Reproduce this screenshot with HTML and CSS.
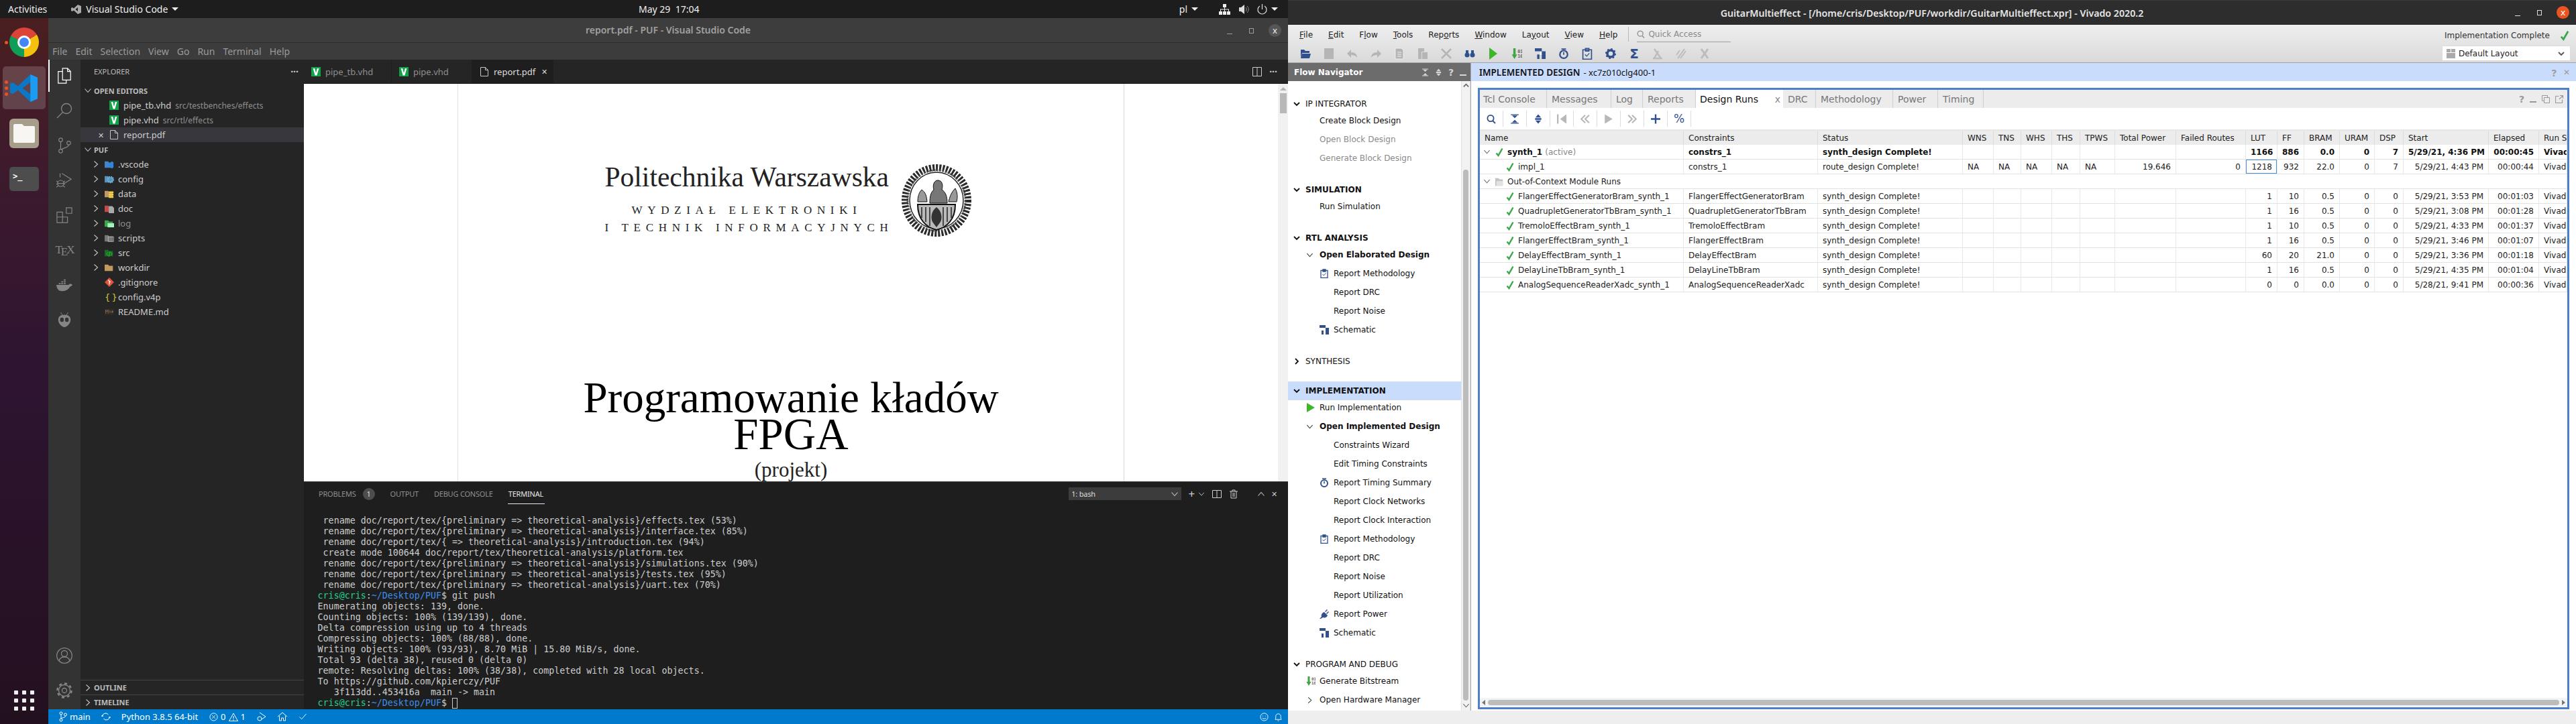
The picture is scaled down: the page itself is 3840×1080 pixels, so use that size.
FILE: index.html
```html
<!DOCTYPE html>
<html lang="en">
<head>
    <meta charset="UTF-8">
    <title>Desktop</title>
    <link rel="stylesheet" href="styles.css">
</head>
<body>
<svg class="defs" aria-hidden="true">
    <symbol id="chev-down" viewBox="0 0 12 12"><path d="M1.5 3.5 6 8.5l4.5-5" fill="none" stroke="currentColor" stroke-width="1.1"/></symbol>
    <symbol id="chev-right" viewBox="0 0 12 12"><path d="M3.5 1.5 8.5 6l-5 4.5" fill="none" stroke="currentColor" stroke-width="1.1"/></symbol>
    <symbol id="chev-bold-down" viewBox="0 0 12 12"><path d="M2 4l4 4 4-4" fill="none" stroke="currentColor" stroke-width="1.8"/></symbol>
    <symbol id="chev-bold-right" viewBox="0 0 12 12"><path d="M4 2l4 4-4 4" fill="none" stroke="currentColor" stroke-width="1.8"/></symbol>
    <symbol id="folder" viewBox="0 0 16 16"><path d="M0 3h6l1.5 2H14v9H0z" fill="currentColor"/></symbol>
    <symbol id="vhd" viewBox="0 0 14 14"><rect width="14" height="14" fill="#12a24a"/><path d="M2.6 2h2.6L7 9l1.8-7h2.6L8.4 12.4H5.6z" fill="#fff"/></symbol>
    <symbol id="page" viewBox="0 0 12 14"><path d="M.5.5h7l4 4v9H.5zM7.5.5v4h4" fill="none" stroke="currentColor"/></symbol>
    <symbol id="check" viewBox="0 0 12 14"><path d="M1.5 8.5 4.5 12 10.5 1.5" fill="none" stroke="#3aa84a" stroke-width="2.4"/></symbol>
    <symbol id="clipboard" viewBox="0 0 12 14"><path d="M1 2.5h10v11H1zM4 1h4v3H4z" fill="none" stroke="#32508a" stroke-width="1.3"/><path d="M3.5 8 5.4 10 8.5 6.5" fill="none" stroke="#32508a"/></symbol>
    <symbol id="schematic" viewBox="0 0 14 14"><path d="M0 0h9v4h5v10H9V9H6v5H3V8h3V4H0z" fill="#32508a"/><path d="M9 4v5H6V4z" fill="#fff"/></symbol>
    <symbol id="play" viewBox="0 0 12 14"><path d="M0 0l12 7-12 7z" fill="#3fb52c"/></symbol>
    <symbol id="timer" viewBox="0 0 14 14"><circle cx="7" cy="8" r="5" fill="none" stroke="#32508a" stroke-width="2"/><path d="M7 5v3.5M4 1h6" stroke="#32508a" stroke-width="1.5"/></symbol>
    <symbol id="plug" viewBox="0 0 14 14"><path d="M0 14l3-3c-1-3 1-6 4-7l5 5c-1 3-4 4-7 3l-3 2zM8 3l3-3 1 1-3 3zM10 6l3-3 1 1-3 3z" fill="#32508a"/></symbol>
    <symbol id="collapse" viewBox="0 0 12 12"><path d="M1 0h10v1H1zM1 11h10v1H1zM6 5 2.5 1.5h7zM6 7l3.5 3.5h-7z" fill="currentColor"/></symbol>
    <symbol id="expand" viewBox="0 0 12 12"><path d="M6 0l3.5 4h-7zM6 12 2.5 8h7zM2 5h8v2H2z" fill="currentColor"/></symbol>
    <symbol id="magnifier" viewBox="0 0 14 14"><circle cx="6" cy="6" r="4.6" fill="none" stroke="currentColor" stroke-width="1.8"/><path d="M9 9.5 13 13.5" stroke="currentColor" stroke-width="1.8"/></symbol>
</svg>

<div class="desktop">
    <!-- left monitor -->
    <div class="monitor">
        <div class="topbar">
            <span class="top-activities">Activities</span>
            <div class="top-app">
                <svg class="top-app-icon" viewBox="0 0 15 14"><path d="M10 0l5 2v10l-5 2-6-5.5L1.500 10 0 9V5l1.500-1L4 5.500zM10 4 6.500 7 10 10z" fill="#a9a9a9" fill-rule="evenodd"/></svg>
                <span>Visual Studio Code</span><i class="caret"></i>
            </div>
            <span class="top-clock">May 29&nbsp; 17:04</span>
            <div class="top-tray">
                <span class="top-lang">pl</span><i class="caret"></i>
                <svg class="tray-net" viewBox="0 0 17 16"><path d="M6 0h5v5H9v2.500h6V11h2v5h-5v-5h2V8.500H9V11h2v5H6v-5h2V8.500H3V11h2v5H0v-5h2V7.500h6V5H6z" fill="#eee"/></svg>
                <svg class="tray-vol" viewBox="0 0 15 16"><path d="M0 5h3l5-4v14l-5-4H0z" fill="#ddd"/><path d="M10 5c1.500 1.500 1.500 4.500 0 6M12 3c3 3 3 7 0 10" fill="none" stroke="#999"/></svg>
                <svg class="tray-power" viewBox="0 0 15 16"><path d="M4 3a6.500 6.500 0 1 0 7 0M7.500 0v8" fill="none" stroke="#ddd" stroke-width="1.200"/></svg>
                <i class="caret"></i>
            </div>
        </div>
        <div class="monitor-body">
            <div class="dock">
                <div class="dock-item">
                    <span class="dock-dot"></span>
                    <div class="chrome"><div class="chrome-eye"></div></div>
                </div>
                <div class="dock-item dock-active">
                    <span class="dock-dots"><b></b><b></b><b></b></span>
                    <svg class="vs-logo" viewBox="0 0 44 44"><path d="M31 1 12 19 4 13 0 15v14l4 2 8-6 19 18 11-5V6zM31 13 19 22l12 9z" fill="#0a78c6" fill-rule="evenodd"/><path d="M31 1l11 5v32l-11 5z" fill="#1b9cf2"/></svg>
                </div>
                <div class="dock-item">
                    <div class="files-tile"><svg viewBox="0 0 32 28"><path d="M0 2a2 2 0 0 1 2-2h11l3 3h14a2 2 0 0 1 2 2v21a2 2 0 0 1-2 2H2a2 2 0 0 1-2-2z" fill="#f8f6f3"/></svg></div>
                </div>
                <div class="dock-item">
                    <div class="term-tile"><span class="term-glyph">&gt;_</span></div>
                </div>
                <div class="dock-grid">
                    <b></b><b></b><b></b><b></b><b></b><b></b><b></b><b></b><b></b>
                </div>
            </div>

            <div class="code-window">
                <div class="code-title">
                    <span class="code-title-text">report.pdf - PUF - Visual Studio Code</span>
                    <div class="code-winbtns">
                        <i class="btn-min"></i>
                        <i class="btn-max"></i>
                        <span class="btn-close">x</span>
                    </div>
                </div>
                <div class="code-menu">
                    <span>File</span><span>Edit</span><span>Selection</span><span>View</span><span>Go</span><span>Run</span><span>Terminal</span><span>Help</span>
                </div>
                <div class="code-body">
                    <div class="activity">
                        <div class="act-item act-on"><svg viewBox="0 0 24 26"><path d="M9 1h8l5 5v14H9zM17 1v5h5M9 6H2v19h13v-5" fill="none" stroke="#fff" stroke-width="1.300"/></svg></div>
                        <div class="act-item"><svg viewBox="0 0 24 24"><circle cx="15" cy="9" r="7.500" fill="none" stroke="#858585" stroke-width="1.300"/><path d="M9.500 14.500 1 23" stroke="#858585" stroke-width="1.300"/></svg></div>
                        <div class="act-item"><svg viewBox="0 0 24 26"><circle cx="6" cy="4" r="3" class="act-line"/><circle cx="6" cy="22" r="3" class="act-line"/><circle cx="19" cy="9" r="3" class="act-line"/><path d="M6 7v12M19 12c0 5-9 4-12 8" class="act-line"/></svg></div>
                        <div class="act-item"><svg viewBox="0 0 26 26"><path d="M9 2l15 9-11 7M6 8V2" class="act-line"/><circle cx="7" cy="18" r="5" class="act-line"/><path d="M0 14l3 2M0 24l3-2M14 14l-3 2M14 24l-3-2M0 19h2M12 19h2M2 18h10" class="act-line"/></svg></div>
                        <div class="act-item"><svg viewBox="0 0 26 26"><path d="M1 8h9v8h8v9H1zM1 16h9v9M16 1h9v9h-9z" class="act-line"/></svg></div>
                        <div class="act-item"><span class="tex-glyph">T<sub>E</sub>X</span></div>
                        <div class="act-item"><svg viewBox="0 0 26 20"><path d="M0 10h20c1-2 4-2 6 0-1 2-3 2-4 3-3 6-9 7-13 7-5 0-8-3-9-10z" fill="#858585"/><path d="M4 7h3v2H4zM8 7h3v2H8zM12 7h3v2h-3zM8 4h3v2H8zM12 4h3v2h-3zM12 1h3v2h-3z" fill="#858585"/></svg></div>
                        <div class="act-item"><svg viewBox="0 0 22 26"><path d="M11 5c6 0 10 3 10 8 0 6-6 12-10 12S1 19 1 13c0-5 4-8 10-8z" fill="#858585"/><path d="M5 1l3 5M17 1l-3 5" stroke="#858585"/><ellipse cx="7" cy="13" rx="3" ry="3.500" fill="#333"/><ellipse cx="15" cy="13" rx="3" ry="3.500" fill="#333"/></svg></div>
                        <div class="act-spacer"></div>
                        <div class="act-item"><svg viewBox="0 0 24 24"><circle cx="12" cy="12" r="11.300" class="act-line"/><circle cx="12" cy="9" r="4.500" class="act-line"/><path d="M4 20c1-5 4-6 8-6s7 1 8 6" class="act-line"/></svg></div>
                        <div class="act-item"><svg viewBox="0 0 24 24"><circle cx="12" cy="12" r="8.500" class="act-line"/><circle cx="12" cy="12" r="10.500" class="act-line act-teeth"/><circle cx="12" cy="12" r="3.500" class="act-line"/></svg></div>
                    </div>

                    <div class="sidebar">
                        <div class="side-title"><span>EXPLORER</span><span class="side-more">···</span></div>
                        <div class="side-head"><svg class="chev"><use href="#chev-down"/></svg>OPEN EDITORS</div>
                        <div class="open-row"><svg class="vhd-ico"><use href="#vhd"/></svg><span class="fname">pipe_tb.vhd</span><span class="fdesc">src/testbenches/effects</span></div>
                        <div class="open-row"><svg class="vhd-ico"><use href="#vhd"/></svg><span class="fname">pipe.vhd</span><span class="fdesc">src/rtl/effects</span></div>
                        <div class="open-row open-row-on"><span class="row-x">✕</span><svg class="page-ico"><use href="#page"/></svg><span class="fname">report.pdf</span></div>
                        <div class="side-head"><svg class="chev"><use href="#chev-down"/></svg>PUF</div>
                        <div class="tree-row"><svg class="chev"><use href="#chev-right"/></svg>
                            <svg class="tree-ico" viewBox="0 0 16 16"><use href="#folder" class="f-blue"/><path d="M12 3l3 1.500v9L12 15 6 10l-2 1.500V7l2 1.500z" fill="#2f86e0"/></svg><span>.vscode</span></div>
                        <div class="tree-row"><svg class="chev"><use href="#chev-right"/></svg>
                            <svg class="tree-ico" viewBox="0 0 16 16"><use href="#folder" class="f-sky"/><circle cx="10" cy="9" r="4.500" fill="none" stroke="#6fb5dd" stroke-width="3" stroke-dasharray="2 1"/></svg><span>config</span></div>
                        <div class="tree-row"><svg class="chev"><use href="#chev-right"/></svg>
                            <svg class="tree-ico" viewBox="0 0 16 16"><use href="#folder" class="f-tan"/><path d="M7 4h8v3H7zM7 8h8v3H7zM7 12h8v3H7z" fill="#f2cf45"/></svg><span>data</span></div>
                        <div class="tree-row"><svg class="chev"><use href="#chev-right"/></svg>
                            <svg class="tree-ico" viewBox="0 0 16 16"><use href="#folder" class="f-red"/><path d="M7 4h6l3 3v9H7z" fill="#a9a9a9"/></svg><span>doc</span></div>
                        <div class="tree-row row-dim"><svg class="chev"><use href="#chev-right"/></svg>
                            <svg class="tree-ico" viewBox="0 0 16 16"><use href="#folder" class="f-green"/><path d="M5 8h11v7H5z" fill="#a7f2b8"/></svg><span>log</span></div>
                        <div class="tree-row"><svg class="chev"><use href="#chev-right"/></svg>
                            <svg class="tree-ico" viewBox="0 0 16 16"><use href="#folder" class="f-grey"/><rect x="6" y="6" width="9" height="8" fill="none" stroke="#bbb"/></svg><span>scripts</span></div>
                        <div class="tree-row"><svg class="chev"><use href="#chev-right"/></svg>
                            <svg class="tree-ico" viewBox="0 0 16 16"><use href="#folder" class="f-dkgreen"/><path d="M6 7 3 10l3 3M10 7l3 3-3 3M9 6l-2 9" fill="none" stroke="#2ecc2e"/></svg><span>src</span></div>
                        <div class="tree-row"><svg class="chev"><use href="#chev-right"/></svg>
                            <svg class="tree-ico" viewBox="0 0 16 16"><use href="#folder" class="f-tan2"/></svg><span>workdir</span></div>
                        <div class="tree-row tree-file">
                            <svg class="tree-ico" viewBox="0 0 16 16"><path d="M8 0l8 8-8 8-8-8z" fill="#e2513b"/><path d="M6 4l4 4M8 6v6" stroke="#fff" stroke-width="1.300"/></svg><span>.gitignore</span></div>
                        <div class="tree-row tree-file"><span class="tree-brace">{ }</span><span>config.v4p</span></div>
                        <div class="tree-row tree-file">
                            <svg class="tree-ico" viewBox="0 0 16 10"><rect width="16" height="10" fill="#332b24"/><path d="M2 8V2l2 3 2-3v6M9 3v4M13 3v4M11 5h4" fill="none" stroke="#8a7560"/></svg><span>README.md</span></div>
                        <div class="side-spacer"></div>
                        <div class="side-foot"><svg class="chev"><use href="#chev-right"/></svg>OUTLINE</div>
                        <div class="side-foot"><svg class="chev"><use href="#chev-right"/></svg>TIMELINE</div>
                    </div>

                    <div class="code-main">
                        <div class="tabs">
                            <div class="tab tab-first"><svg class="vhd-ico"><use href="#vhd"/></svg>pipe_tb.vhd</div>
                            <div class="tab"><svg class="vhd-ico"><use href="#vhd"/></svg>pipe.vhd</div>
                            <div class="tab tab-on"><svg class="page-ico"><use href="#page"/></svg>report.pdf<span class="tab-x">✕</span></div>
                            <div class="tabs-right">
                                <svg class="split-ico" viewBox="0 0 14 14"><path d="M.5.5h13v13H.5zM7 .5v13" fill="none" stroke="#ccc"/></svg>
                                <span class="side-more">···</span>
                            </div>
                        </div>
                        <div class="pdf-view">
                            <div class="pdf-page">
                                <div class="pdf-head">
                                    <div class="pdf-school">
                                        <div class="pdf-name">Politechnika Warszawska</div>
                                        <div class="pdf-dept">WYDZIAŁ ELEKTRONIKI</div>
                                        <div class="pdf-dept">I TECHNIK INFORMACYJNYCH</div>
                                    </div>
                                    <svg class="pdf-seal" viewBox="0 0 105 108">
                                        <ellipse cx="52" cy="54" rx="47" ry="49" fill="none" stroke="#2a2a2a" stroke-width="10" stroke-dasharray="3 2"/>
                                        <ellipse cx="52" cy="54" rx="43" ry="45" fill="none" stroke="#555" stroke-width="3" stroke-dasharray="1.500 2.500"/>
                                        <ellipse cx="52" cy="54" rx="40" ry="42" fill="#fff" stroke="#222" stroke-width="1.500"/>
                                        <path d="M24 60h56c0 22-12 34-28 38-16-4-28-16-28-38z" fill="#bbb" stroke="#111" stroke-width="2"/>
                                        <path d="M30 64v16M36 64v22M42 64v28M62 64v28M68 64v22M74 64v16" stroke="#222" stroke-width="1.500"/>
                                        <path d="M52 64c-8 6-9 16-6 22l6 8 6-8c3-6 2-16-6-22z" fill="#333"/>
                                        <path d="M42 58c0-12 2-16 6-20-2-6 0-14 6-14 7 0 8 8 6 14 5 3 8 9 8 20z" fill="#777" stroke="#111"/>
                                        <path d="M24 56c0-8 2-14 6-18 4 3 7 6 8 18zM70 56c2-8 4-14 10-20 3 6 4 12 2 20z" fill="#999" stroke="#111"/>
                                    </svg>
                                </div>
                                <div class="pdf-big">Programowanie kładów</div>
                                <div class="pdf-big pdf-fpga">FPGA</div>
                                <div class="pdf-sub">(projekt)</div>
                            </div>
                            <div class="pdf-scroll"><i class="pdf-scroll-up"></i><i class="pdf-scroll-thumb"></i></div>
                        </div>
                        <div class="panel">
                            <div class="panel-tabs">
                                <span>PROBLEMS<b class="panel-badge">1</b></span>
                                <span>OUTPUT</span>
                                <span>DEBUG CONSOLE</span>
                                <span class="panel-on">TERMINAL</span>
                                <div class="panel-right">
                                    <div class="bash-select"><span>1: bash</span><svg class="chev"><use href="#chev-down"/></svg></div>
                                    <span class="pi">+</span>
                                    <svg class="chev pi-chev"><use href="#chev-down"/></svg>
                                    <svg class="pi-svg" viewBox="0 0 14 14"><path d="M.5 1.500h13v11H.5zM7 1.500v11" fill="none" stroke="#ccc"/></svg>
                                    <svg class="pi-svg" viewBox="0 0 14 14"><path d="M1 3h12M5 3V1h4v2M3 3v10h8V3M6 5v6M8 5v6" fill="none" stroke="#ccc"/></svg>
                                    <svg class="chev pi-up"><use href="#chev-down"/></svg>
                                    <span class="pi-x">✕</span>
                                </div>
                            </div>
                            <div class="terminal"><div> rename doc/report/tex/{preliminary =&gt; theoretical-analysis}/effects.tex (53%)</div><div> rename doc/report/tex/{preliminary =&gt; theoretical-analysis}/interface.tex (85%)</div><div> rename doc/report/tex/{ =&gt; theoretical-analysis}/introduction.tex (94%)</div><div> create mode 100644 doc/report/tex/theoretical-analysis/platform.tex</div><div> rename doc/report/tex/{preliminary =&gt; theoretical-analysis}/simulations.tex (90%)</div><div> rename doc/report/tex/{preliminary =&gt; theoretical-analysis}/tests.tex (95%)</div><div> rename doc/report/tex/{preliminary =&gt; theoretical-analysis}/uart.tex (70%)</div><div><span class="t-user">cris@cris</span>:<span class="t-path">~/Desktop/PUF</span>$ git push</div><div>Enumerating objects: 139, done.</div><div>Counting objects: 100% (139/139), done.</div><div>Delta compression using up to 4 threads</div><div>Compressing objects: 100% (88/88), done.</div><div>Writing objects: 100% (93/93), 8.70 MiB | 15.80 MiB/s, done.</div><div>Total 93 (delta 38), reused 0 (delta 0)</div><div>remote: Resolving deltas: 100% (38/38), completed with 28 local objects.</div><div>To https://github.com/kpierczy/PUF</div><div>   3f113dd..453416a  main -&gt; main</div><div><span class="t-user">cris@cris</span>:<span class="t-path">~/Desktop/PUF</span>$ <i class="t-cursor"></i></div></div>
                        </div>
                    </div>
                </div>
                <div class="status">
                    <svg class="st-branch" viewBox="0 0 12 16"><circle cx="3" cy="3" r="2" class="st-line"/><circle cx="3" cy="13" r="2" class="st-line"/><circle cx="9.500" cy="5" r="2" class="st-line"/><path d="M3 5v6M9.500 7c0 3-5 2-6 4" class="st-line"/></svg>
                    <span class="st-main">main</span>
                    <svg class="st-sync" viewBox="0 0 14 12"><path d="M1.500 6a5 5 0 0 1 9-3M12.500 6a5 5 0 0 1-9 3M0 5h3M11 7h3" class="st-line"/></svg>
                    <span class="st-python">Python 3.8.5 64-bit</span>
                    <svg class="st-err" viewBox="0 0 14 14"><circle cx="7" cy="7" r="6" class="st-line"/><path d="M4.500 4.500l5 5M9.500 4.500l-5 5" class="st-line"/></svg>
                    <span class="st-num">0</span>
                    <svg class="st-warn" viewBox="0 0 14 13"><path d="M7 1 13.500 12.500H.5zM7 5v4M7 10v1.500" class="st-line"/></svg>
                    <span class="st-num">1</span>
                    <svg class="st-debug" viewBox="0 0 14 14"><path d="M4 1l9 6-6 4" class="st-line"/><circle cx="4" cy="10" r="3" class="st-line"/></svg>
                    <svg class="st-home" viewBox="0 0 14 14"><path d="M0 7l7-6 7 6M2.500 6v7h3V9h3v4h3V6" class="st-line"/></svg>
                    <svg class="st-check" viewBox="0 0 12 10"><path d="M.5 5.500 4 9l7.500-8.500" class="st-line"/></svg>
                    <div class="st-right">
                        <svg class="st-ico" viewBox="0 0 14 14"><circle cx="7" cy="7" r="6" class="st-line"/><path d="M4 8.500c2 2 4 2 6 0M5 5v1M9 5v1" class="st-line"/></svg>
                        <svg class="st-ico" viewBox="0 0 14 14"><path d="M2 11c1-1 1-3 1-5 0-3 2-4 4-4s4 1 4 4c0 2 0 4 1 5zM6 13h2" class="st-line"/></svg>
                    </div>
                </div>
            </div>
        </div>
    </div>

    <!-- right monitor -->
    <div class="vivado">
        <div class="viv-title">
            <span class="viv-title-text">GuitarMultieffect - [/home/cris/Desktop/PUF/workdir/GuitarMultieffect.xpr] - Vivado 2020.2</span>
            <div class="viv-winbtns">
                <i class="btn-min btn-min-w"></i>
                <i class="btn-max btn-max-w"></i>
                <span class="btn-close btn-close-o">x</span>
            </div>
        </div>
        <div class="viv-bars">
            <div class="viv-left">
                <div class="viv-menu">
                    <span><u>F</u>ile</span><span><u>E</u>dit</span><span>F<u>l</u>ow</span><span><u>T</u>ools</span><span>Rep<u>o</u>rts</span><span><u>W</u>indow</span><span>La<u>y</u>out</span><span><u>V</u>iew</span><span><u>H</u>elp</span>
                    <div class="viv-quick"><svg class="quick-ico"><use href="#magnifier"/></svg>Quick Access</div>
                </div>
                <div class="viv-tools">
                    <svg class="vt" viewBox="0 0 16 18"><path d="M1 3h5l2 2h6v3H3L1 15zM3 9h13l-2 7H1z" fill="#2f4f8f"/></svg>
                    <svg class="vt" viewBox="0 0 16 18"><path d="M1 1h14v16H1zM4 1h8v6H4zM9 2h2v4H9z" fill="#b5b5b5"/></svg>
                    <svg class="vt" viewBox="0 0 16 18"><path d="M0 9l6-6v4c6 0 9 3 9 8-2-3-5-4-9-4v4z" fill="#b5b5b5"/></svg>
                    <svg class="vt" viewBox="0 0 16 18"><path d="M16 9l-6-6v4c-6 0-9 3-9 8 2-3 5-4 9-4v4z" fill="#b5b5b5"/></svg>
                    <svg class="vt" viewBox="0 0 16 18"><path d="M2 1h9l3 3v13H2zM5 7h6M5 10h6M5 13h6" fill="#b5b5b5" stroke="#eee"/></svg>
                    <svg class="vt" viewBox="0 0 16 18"><path d="M1 1h9v5H1zM1 6h5v11H1zM7 7h8v10H7z" fill="#b5b5b5"/></svg>
                    <svg class="vt" viewBox="0 0 16 18"><path d="M1 2l14 14M15 2 1 16" stroke="#b5b5b5" stroke-width="2.500"/></svg>
                    <svg class="vt" viewBox="0 0 16 18"><circle cx="4" cy="11" r="3.500" fill="#2f4f8f"/><circle cx="12" cy="11" r="3.500" fill="#2f4f8f"/><path d="M2 4h4v6H2zM10 4h4v6h-4z" fill="#2f4f8f"/></svg>
                    <svg class="vt" viewBox="0 0 12 18"><path d="M0 0l12 9-12 9z" fill="#3fb52c"/></svg>
                    <svg class="vt" viewBox="0 0 14 14"><path d="M2.500 0h3v8h2L4 14 .5 8h2z" fill="#3fa648"/><text x="8" y="6" class="bits">01</text><text x="8" y="12" class="bits">10</text></svg>
                    <svg class="vt"><use href="#schematic"/></svg>
                    <svg class="vt"><use href="#timer"/></svg>
                    <svg class="vt"><use href="#clipboard"/></svg>
                    <svg class="vt" viewBox="0 0 16 16"><circle cx="8" cy="8" r="5" fill="none" stroke="#2f4f8f" stroke-width="3.500"/><circle cx="8" cy="8" r="7" fill="none" stroke="#2f4f8f" stroke-width="2" stroke-dasharray="2.500 3"/></svg>
                    <span class="vt vt-sigma">Σ</span>
                    <svg class="vt" viewBox="0 0 16 18"><path d="M1 16h14M3 2l10 14M9 5l-6 11" stroke="#bdbdbd" stroke-width="2.500" fill="none"/></svg>
                    <svg class="vt" viewBox="0 0 16 18"><path d="M3 16 13 2M7 16 15 5M1 11l5-7" stroke="#bdbdbd" stroke-width="2" fill="none"/></svg>
                    <svg class="vt" viewBox="0 0 16 18"><path d="M3 2l10 14M13 2 3 16" stroke="#bdbdbd" stroke-width="3" fill="none"/></svg>
                </div>
            </div>
            <div class="viv-state">
                <div class="viv-done">Implementation Complete<svg class="done-check"><use href="#check"/></svg></div>
                <div class="viv-layout">
                    <svg class="layout-ico" viewBox="0 0 13 16"><path d="M0 1h6v5H0zM7 1h6v5H7zM0 7h13v8H0z" fill="#aaa"/></svg>
                    <span>Default Layout</span>
                    <svg class="chev layout-chev"><use href="#chev-bold-down"/></svg>
                </div>
            </div>
        </div>
        <div class="viv-body">
            <div class="flow">
                <div class="flow-head">
                    <span>Flow Navigator</span>
                    <div class="flow-head-icons">
                        <svg><use href="#collapse"/></svg>
                        <svg><use href="#expand"/></svg>
                        <b>?</b>
                        <i class="flow-min"></i>
                    </div>
                </div>
                <div class="flow-main">
                    <div class="flow-list">
                        <div class="fsec fsec-plain"><svg class="fchev"><use href="#chev-bold-down"/></svg>IP INTEGRATOR</div>
                        <div class="fi">Create Block Design</div>
                        <div class="fi fi-off">Open Block Design</div>
                        <div class="fi fi-off">Generate Block Design</div>

                        <div class="fsec"><svg class="fchev"><use href="#chev-bold-down"/></svg>SIMULATION</div>
                        <div class="fi">Run Simulation</div>

                        <div class="fsec"><svg class="fchev"><use href="#chev-bold-down"/></svg>RTL ANALYSIS</div>
                        <div class="fi fi-b"><svg class="fi-chev"><use href="#chev-down"/></svg>Open Elaborated Design</div>
                        <div class="fs"><svg class="fs-ico"><use href="#clipboard"/></svg>Report Methodology</div>
                        <div class="fs">Report DRC</div>
                        <div class="fs">Report Noise</div>
                        <div class="fs"><svg class="fs-ico"><use href="#schematic"/></svg>Schematic</div>

                        <div class="fsec fsec-plain"><svg class="fchev"><use href="#chev-bold-right"/></svg>SYNTHESIS</div>

                        <div class="fsec fsec-on"><svg class="fchev"><use href="#chev-bold-down"/></svg>IMPLEMENTATION</div>
                        <div class="fi"><svg class="fi-ico"><use href="#play"/></svg>Run Implementation</div>
                        <div class="fi fi-b"><svg class="fi-chev"><use href="#chev-down"/></svg>Open Implemented Design</div>
                        <div class="fs">Constraints Wizard</div>
                        <div class="fs">Edit Timing Constraints</div>
                        <div class="fs"><svg class="fs-ico"><use href="#timer"/></svg>Report Timing Summary</div>
                        <div class="fs">Report Clock Networks</div>
                        <div class="fs">Report Clock Interaction</div>
                        <div class="fs"><svg class="fs-ico"><use href="#clipboard"/></svg>Report Methodology</div>
                        <div class="fs">Report DRC</div>
                        <div class="fs">Report Noise</div>
                        <div class="fs">Report Utilization</div>
                        <div class="fs"><svg class="fs-ico"><use href="#plug"/></svg>Report Power</div>
                        <div class="fs"><svg class="fs-ico"><use href="#schematic"/></svg>Schematic</div>

                        <div class="fsec fsec-plain"><svg class="fchev"><use href="#chev-bold-down"/></svg>PROGRAM AND DEBUG</div>
                        <div class="fi"><svg class="fi-ico" viewBox="0 0 14 14"><path d="M2.500 0h3v8h2L4 14 .5 8h2z" fill="#3fa648"/><text x="8" y="6" class="bits">01</text><text x="8" y="12" class="bits">10</text></svg>Generate Bitstream</div>
                        <div class="fi"><svg class="fi-chev"><use href="#chev-right"/></svg>Open Hardware Manager</div>
                    </div>
                    <div class="flow-scroll"><svg class="fscroll-up"><use href="#chev-bold-down"/></svg><i class="flow-thumb"></i><svg class="fscroll-down"><use href="#chev-down"/></svg></div>
                </div>
            </div>

            <div class="viv-main">
                <div class="impl-bar">
                    <b>IMPLEMENTED DESIGN</b><span class="impl-part">- xc7z010clg400-1</span>
                    <span class="impl-help">?</span><span class="impl-close">✕</span>
                </div>
                <div class="runs-wrap">
                    <div class="runs">
                        <div class="runs-tabs">
                            <span class="rt">Tcl Console</span>
                            <span class="rt">Messages</span>
                            <span class="rt">Log</span>
                            <span class="rt">Reports</span>
                            <span class="rt rt-on">Design Runs<i class="rt-x">x</i></span>
                            <span class="rt">DRC</span>
                            <span class="rt">Methodology</span>
                            <span class="rt">Power</span>
                            <span class="rt">Timing</span>
                            <div class="rt-right">
                                <b>?</b><i class="flow-min rt-min"></i>
                                <svg viewBox="0 0 12 12"><path d="M3.500 3.500h8v8h-8zM3.500 8.500H.5v-8h8v3" fill="none" stroke="#999"/></svg>
                                <svg viewBox="0 0 12 12"><path d="M.5 1.500h5M.5 1.500v10h10v-5M7 .5h4.500V5M11 1 6 6" fill="none" stroke="#999" stroke-width="1.200"/></svg>
                            </div>
                        </div>
                        <div class="runs-tools">
                            <span class="rb rb-blue"><svg><use href="#magnifier"/></svg></span>
                            <span class="rb rb-blue"><svg><use href="#collapse"/></svg></span>
                            <span class="rb rb-blue"><svg><use href="#expand"/></svg></span>
                            <span class="rb rb-grey"><svg viewBox="0 0 12 12"><path d="M0 0h2v12H0zM12 0v12L4 6z" fill="currentColor"/></svg></span>
                            <span class="rb rb-grey"><svg viewBox="0 0 12 12"><path d="M6 1 1 6l5 5M11 1 6 6l5 5" fill="none" stroke="currentColor" stroke-width="1.800"/></svg></span>
                            <span class="rb rb-grey"><svg viewBox="0 0 12 12"><path d="M1 0l10 6-10 6z" fill="currentColor"/></svg></span>
                            <span class="rb rb-grey"><svg viewBox="0 0 12 12"><path d="M1 1l5 5-5 5M6 1l5 5-5 5" fill="none" stroke="currentColor" stroke-width="1.800"/></svg></span>
                            <span class="rb rb-blue"><svg viewBox="0 0 12 12"><path d="M5 0h2v5h5v2H7v5H5V7H0V5h5z" fill="currentColor"/></svg></span>
                            <span class="rb rb-blue rb-pct">%</span>
                        </div>
                        <div class="runs-table-wrap">
                            <table class="runs-table">
                                <colgroup>
                                    <col class="c-name"><col class="c-con"><col class="c-status"><col class="c-wns"><col class="c-tns"><col class="c-whs"><col class="c-ths"><col class="c-tpws"><col class="c-power"><col class="c-failed"><col class="c-lut"><col class="c-ff"><col class="c-bram"><col class="c-uram"><col class="c-dsp"><col class="c-start"><col class="c-elapsed"><col class="c-runs">
                                </colgroup>
                                <thead>
                                    <tr><th>Name</th><th>Constraints</th><th>Status</th><th>WNS</th><th>TNS</th><th>WHS</th><th>THS</th><th>TPWS</th><th>Total Power</th><th>Failed Routes</th><th>LUT</th><th>FF</th><th>BRAM</th><th>URAM</th><th>DSP</th><th>Start</th><th>Elapsed</th><th>Run S</th></tr>
                                </thead>
                                <tbody>
                                    <tr class="row-bold">
                                        <td class="lv1"><svg class="tchev"><use href="#chev-down"/></svg><svg class="tcheck"><use href="#check"/></svg>synth_1 <span class="active-tag">(active)</span></td>
                                        <td>constrs_1</td><td>synth_design Complete!</td><td></td><td></td><td></td><td></td><td></td><td></td><td></td>
                                        <td class="num">1166</td><td class="num">886</td><td class="num">0.0</td><td class="num">0</td><td class="num">7</td><td class="num">5/29/21, 4:36 PM</td><td class="num">00:00:45</td><td>Vivad</td>
                                    </tr>
                                    <tr>
                                        <td class="lv2"><svg class="tcheck"><use href="#check"/></svg>impl_1</td>
                                        <td>constrs_1</td><td>route_design Complete!</td><td>NA</td><td>NA</td><td>NA</td><td>NA</td><td>NA</td><td class="num">19.646</td><td class="num">0</td>
                                        <td class="num cell-sel">1218</td><td class="num">932</td><td class="num">22.0</td><td class="num">0</td><td class="num">7</td><td class="num">5/29/21, 4:43 PM</td><td class="num">00:00:44</td><td>Vivad</td>
                                    </tr>
                                    <tr>
                                        <td class="lv1 row-group" colspan="18"><svg class="tchev"><use href="#chev-down"/></svg><svg class="tfolder" viewBox="0 0 16 16"><path d="M1 2h6l1 2h6v11H1z" fill="#c4c4c4"/><path d="M3 7h11v8H3z" fill="#e2e2e2"/></svg>Out-of-Context Module Runs</td>
                                    </tr>
                                    <tr>
                                        <td class="lv2"><svg class="tcheck"><use href="#check"/></svg>FlangerEffectGeneratorBram_synth_1</td>
                                        <td>FlangerEffectGeneratorBram</td><td>synth_design Complete!</td><td></td><td></td><td></td><td></td><td></td><td></td><td></td>
                                        <td class="num">1</td><td class="num">10</td><td class="num">0.5</td><td class="num">0</td><td class="num">0</td><td class="num">5/29/21, 3:53 PM</td><td class="num">00:01:03</td><td>Vivad</td>
                                    </tr>
                                    <tr>
                                        <td class="lv2"><svg class="tcheck"><use href="#check"/></svg>QuadrupletGeneratorTbBram_synth_1</td>
                                        <td>QuadrupletGeneratorTbBram</td><td>synth_design Complete!</td><td></td><td></td><td></td><td></td><td></td><td></td><td></td>
                                        <td class="num">1</td><td class="num">16</td><td class="num">0.5</td><td class="num">0</td><td class="num">0</td><td class="num">5/29/21, 3:08 PM</td><td class="num">00:01:28</td><td>Vivad</td>
                                    </tr>
                                    <tr>
                                        <td class="lv2"><svg class="tcheck"><use href="#check"/></svg>TremoloEffectBram_synth_1</td>
                                        <td>TremoloEffectBram</td><td>synth_design Complete!</td><td></td><td></td><td></td><td></td><td></td><td></td><td></td>
                                        <td class="num">1</td><td class="num">10</td><td class="num">0.5</td><td class="num">0</td><td class="num">0</td><td class="num">5/29/21, 4:33 PM</td><td class="num">00:01:37</td><td>Vivad</td>
                                    </tr>
                                    <tr>
                                        <td class="lv2"><svg class="tcheck"><use href="#check"/></svg>FlangerEffectBram_synth_1</td>
                                        <td>FlangerEffectBram</td><td>synth_design Complete!</td><td></td><td></td><td></td><td></td><td></td><td></td><td></td>
                                        <td class="num">1</td><td class="num">16</td><td class="num">0.5</td><td class="num">0</td><td class="num">0</td><td class="num">5/29/21, 3:46 PM</td><td class="num">00:01:07</td><td>Vivad</td>
                                    </tr>
                                    <tr>
                                        <td class="lv2"><svg class="tcheck"><use href="#check"/></svg>DelayEffectBram_synth_1</td>
                                        <td>DelayEffectBram</td><td>synth_design Complete!</td><td></td><td></td><td></td><td></td><td></td><td></td><td></td>
                                        <td class="num">60</td><td class="num">20</td><td class="num">21.0</td><td class="num">0</td><td class="num">0</td><td class="num">5/29/21, 3:36 PM</td><td class="num">00:01:18</td><td>Vivad</td>
                                    </tr>
                                    <tr>
                                        <td class="lv2"><svg class="tcheck"><use href="#check"/></svg>DelayLineTbBram_synth_1</td>
                                        <td>DelayLineTbBram</td><td>synth_design Complete!</td><td></td><td></td><td></td><td></td><td></td><td></td><td></td>
                                        <td class="num">1</td><td class="num">16</td><td class="num">0.5</td><td class="num">0</td><td class="num">0</td><td class="num">5/29/21, 4:35 PM</td><td class="num">00:01:04</td><td>Vivad</td>
                                    </tr>
                                    <tr>
                                        <td class="lv2"><svg class="tcheck"><use href="#check"/></svg>AnalogSequenceReaderXadc_synth_1</td>
                                        <td>AnalogSequenceReaderXadc</td><td>synth_design Complete!</td><td></td><td></td><td></td><td></td><td></td><td></td><td></td>
                                        <td class="num">0</td><td class="num">0</td><td class="num">0.0</td><td class="num">0</td><td class="num">0</td><td class="num">5/28/21, 9:41 PM</td><td class="num">00:00:36</td><td>Vivad</td>
                                    </tr>
                                </tbody>
                            </table>
                        </div>
                        <div class="runs-hscroll"><i class="hscroll-l"></i><i class="hscroll-thumb"></i><i class="hscroll-r"></i></div>
                    </div>
                </div>
            </div>
        </div>
        <div class="viv-foot"></div>
    </div>
</div>
</body>
</html>
```

FILE: styles.css
```css
* {
    box-sizing: border-box;
}
html, body {
    margin: 0;
    padding: 0;
    background: #000;
}
body {
    width: 3840px;
    height: 1080px;
    overflow: hidden;
    font-family: "Noto Sans", sans-serif;
}
.defs {
    position: absolute;
    width: 0;
    height: 0;
}
.desktop {
    display: grid;
    grid-template-columns: 1920px 1920px;
    height: 1080px;
}
.monitor {
    display: flex;
    flex-direction: column;
    height: 1080px;
}
i {
    display: block;
    font-style: normal;
}

/* gnome top bar */
.topbar {
    position: relative;
    display: flex;
    align-items: center;
    height: 27px;
    flex: none;
    background: #1d1d1d;
    color: #eee;
    font-size: 14px;
}
.top-activities {
    margin-left: 12px;
}
.top-app {
    display: flex;
    align-items: center;
    margin-left: 36px;
}
.top-app-icon {
    width: 15px;
    height: 14px;
    margin-right: 7px;
}
.caret {
    width: 0;
    height: 0;
    margin-left: 6px;
    border: 5px solid transparent;
    border-top: 5px solid #eee;
    border-bottom: 0;
}
.top-clock {
    position: absolute;
    left: 952px;
    top: 4px;
    font-size: 14px;
}
.top-tray {
    display: flex;
    align-items: center;
    margin-left: auto;
    padding-right: 15px;
}
.top-lang {
    font-size: 14px;
}
.tray-net {
    width: 17px;
    height: 16px;
    margin-left: 31px;
}
.tray-vol {
    width: 15px;
    height: 16px;
    margin-left: 13px;
}
.tray-power {
    width: 15px;
    height: 16px;
    margin-left: 12px;
}
.monitor-body {
    display: flex;
    flex: 1;
    min-height: 0;
}

/* ubuntu dock */
.dock {
    position: relative;
    display: flex;
    flex-direction: column;
    align-items: center;
    width: 72px;
    flex: none;
    padding-top: 4px;
    background: linear-gradient(180deg, #4b1f20 0%, #3d1a2d 22%, #2e1431 50%, #23101f 100%);
}
.dock-item {
    position: relative;
    display: flex;
    align-items: center;
    justify-content: center;
    width: 64px;
    height: 64px;
    margin-bottom: 4px;
    border-radius: 5px;
}
.dock-active {
    background: rgba(255, 255, 255, .17);
}
.dock-dot, .dock-dots b {
    display: block;
    width: 5px;
    height: 5px;
    border-radius: 50%;
    background: #e95420;
}
.dock-dot {
    position: absolute;
    left: 3px;
    top: 30px;
}
.dock-dots {
    position: absolute;
    left: 3px;
    top: 21px;
    display: flex;
    flex-direction: column;
    gap: 4px;
}
.chrome {
    display: flex;
    align-items: center;
    justify-content: center;
    width: 44px;
    height: 44px;
    border-radius: 50%;
    background: conic-gradient(from -65deg, #db4437 0 125deg, #f4c20d 125deg 245deg, #0f9d58 245deg 360deg);
}
.chrome-eye {
    width: 20px;
    height: 20px;
    border-radius: 50%;
    background: #4285f4;
    border: 3px solid #fff;
}
.vs-logo {
    width: 43px;
    height: 43px;
}
.files-tile {
    display: flex;
    align-items: center;
    justify-content: center;
    width: 44px;
    height: 44px;
    border-radius: 6px;
    background: #a69d8b;
}
.files-tile svg {
    width: 32px;
    height: 28px;
}
.term-tile {
    width: 44px;
    height: 36px;
    padding: 1px 5px;
    border-radius: 5px;
    background: #4d4d4d;
    color: #fff;
}
.term-glyph {
    font-family: "DejaVu Sans Mono", monospace;
    font-size: 12px;
    font-weight: bold;
}
.dock-grid {
    display: grid;
    grid-template-columns: repeat(3, 6px);
    gap: 6px;
    margin-top: auto;
    margin-bottom: 20px;
}
.dock-grid b {
    height: 6px;
    border-radius: 1px;
    background: #eee;
}

/* vs code window */
.code-window {
    display: flex;
    flex-direction: column;
    flex: 1;
    min-width: 0;
}
.code-title {
    position: relative;
    display: flex;
    align-items: center;
    justify-content: center;
    height: 37px;
    flex: none;
    background: #3d3d3d;
    border-bottom: 1px solid #2c2c2c;
}
.code-title-text {
    color: #a0a0a0;
    font-size: 14px;
    font-weight: 600;
    margin-top: -2px;
}
.code-winbtns, .viv-winbtns {
    position: absolute;
    right: 10px;
    top: 9px;
    display: flex;
    align-items: center;
}
.btn-min {
    width: 8px;
    height: 1px;
    margin-top: 10px;
    background: #9a9a9a;
}
.btn-max {
    width: 7px;
    height: 8px;
    margin-left: 25px;
    border: 1px solid #9a9a9a;
}
.btn-close {
    display: flex;
    align-items: center;
    justify-content: center;
    width: 19px;
    height: 19px;
    margin-left: 22px;
    border-radius: 50%;
    background: #565656;
    color: #eee;
    font-size: 13px;
    line-height: 1;
}
.code-menu {
    display: flex;
    align-items: center;
    gap: 12px;
    height: 25px;
    flex: none;
    padding-left: 6px;
    background: #3c3c3c;
    color: #9a9a9a;
    font-size: 14px;
}
.code-body {
    display: flex;
    flex: 1;
    min-height: 0;
}

.activity {
    display: flex;
    flex-direction: column;
    width: 48px;
    flex: none;
    background: #333;
}
.act-item {
    position: relative;
    display: flex;
    align-items: center;
    justify-content: center;
    height: 48px;
    flex: none;
    margin-bottom: 4px;
}
.act-item svg {
    width: 24px;
    height: 24px;
}
.act-on::before {
    content: "";
    position: absolute;
    left: 0;
    top: 0;
    bottom: 0;
    width: 2px;
    background: #fff;
}
.act-line {
    fill: none;
    stroke: #858585;
    stroke-width: 1.3;
}
.act-teeth {
    stroke-width: 2.5;
    stroke-dasharray: 4 4.200;
}
.act-spacer {
    flex: 1;
}
.tex-glyph {
    color: #858585;
    font-family: "Liberation Serif", serif;
    font-size: 17px;
    letter-spacing: -2px;
}
.tex-glyph sub {
    font-size: 17px;
    vertical-align: -3px;
    line-height: 0;
}

.sidebar {
    display: flex;
    flex-direction: column;
    width: 333px;
    flex: none;
    background: #252526;
    color: #ccc;
    font-size: 13px;
}
.side-title {
    display: flex;
    align-items: center;
    justify-content: space-between;
    height: 35px;
    padding: 0 8px 0 20px;
    font-size: 11px;
    color: #bbb;
}
.side-more {
    font-size: 14px;
    font-weight: bold;
    letter-spacing: 0;
    color: #ccc;
}
.side-head {
    display: flex;
    align-items: center;
    height: 22px;
    padding-left: 5px;
    font-size: 11px;
    font-weight: 700;
    color: #bbb;
}
.side-head .chev {
    margin-right: 3px;
}
.chev {
    width: 12px;
    height: 12px;
    flex: none;
    color: #c5c5c5;
}
.open-row {
    display: flex;
    align-items: center;
    height: 22px;
    padding-left: 43px;
}
.open-row-on {
    position: relative;
    background: #37373d;
    padding-left: 44px;
}
.row-x {
    position: absolute;
    left: 26px;
    font-size: 11px;
}
.vhd-ico {
    width: 14px;
    height: 14px;
    flex: none;
    margin-right: 7px;
}
.page-ico {
    width: 12px;
    height: 14px;
    flex: none;
    margin-right: 8px;
    color: #c5c5c5;
}
.fname {
    margin-right: 6px;
}
.fdesc {
    color: #8f8f8f;
    font-size: 12px;
}
.tree-row {
    display: flex;
    align-items: center;
    height: 22px;
    padding-left: 17px;
}
.tree-file {
    padding-left: 36px;
}
.row-dim {
    color: #8c8c8c;
}
.tree-ico {
    width: 14px;
    height: 14px;
    flex: none;
    margin: 0 6px 0 7px;
}
.tree-file .tree-ico {
    margin-left: 0;
}
.tree-brace {
    width: 20px;
    color: #cbcb41;
    font-size: 13px;
    font-family: "DejaVu Sans", sans-serif;
    letter-spacing: -1px;
}
.f-blue { color: #4a83c4; }
.f-sky { color: #5b93b8; }
.f-tan { color: #bf9a60; }
.f-red { color: #c24a4a; }
.f-green { color: #3da64d; }
.f-grey { color: #777; }
.f-dkgreen { color: #1d6b2a; }
.f-tan2 { color: #c19a5f; }
.side-spacer {
    flex: 1;
}
.side-foot {
    display: flex;
    align-items: center;
    height: 22px;
    padding-left: 5px;
    border-top: 1px solid #444;
    font-size: 11px;
    font-weight: 700;
    color: #bbb;
}
.side-foot .chev {
    margin-right: 3px;
}

.code-main {
    display: flex;
    flex-direction: column;
    flex: 1;
    min-width: 0;
}
.tabs {
    display: flex;
    height: 36px;
    flex: none;
    background: #252526;
    color: #8f8f8f;
    font-size: 13px;
    border-bottom: 1px solid #111;
}
.tab {
    display: flex;
    align-items: center;
    width: 120px;
    padding-left: 11px;
    border-right: 1px solid #1f1f1f;
}
.tab-first {
    width: 131px;
}
.tab-on {
    width: 121px;
    padding-left: 12px;
    background: #1e1e1e;
    color: #ddd;
}
.tab-x {
    margin-left: 9px;
    font-size: 11px;
}
.tabs-right {
    display: flex;
    align-items: center;
    gap: 11px;
    margin-left: auto;
    padding-right: 16px;
}
.split-ico {
    width: 14px;
    height: 14px;
}
.pdf-view {
    position: relative;
    display: flex;
    flex: 1;
    min-height: 0;
    background: #fff;
    overflow: hidden;
}
.pdf-page {
    width: 994px;
    margin-left: 229px;
    flex: none;
    padding-top: 116px;
    border-left: 1px solid #e2e2e2;
    border-right: 1px solid #d8d8d8;
    color: #000;
    font-family: "Liberation Serif", serif;
    text-align: center;
}
.pdf-head {
    display: flex;
    justify-content: center;
    gap: 19px;
    padding-right: 8px;
    height: 323px;
}
.pdf-school {
    width: 423px;
    color: #222;
}
.pdf-name {
    height: 62px;
    font-size: 41.5px;
    line-height: 46px;
    white-space: nowrap;
}
.pdf-dept {
    height: 26px;
    font-size: 17px;
    line-height: 22px;
    letter-spacing: 7.7px;
    white-space: nowrap;
}
.pdf-seal {
    width: 105px;
    height: 108px;
    margin-top: 4px;
    flex: none;
}
.pdf-big {
    height: 58px;
    font-size: 65px;
    line-height: 58px;
    white-space: nowrap;
}
.pdf-big.pdf-fpga {
    font-size: 67px;
    height: 51px;
    line-height: 51px;
}
.pdf-sub {
    font-size: 31px;
    line-height: 55px;
    white-space: nowrap;
    color: #222;
}
.pdf-scroll {
    position: relative;
    width: 15px;
    margin-left: auto;
    background: #f1f1f1;
}
.pdf-scroll-up {
    width: 0;
    height: 0;
    margin: 5px auto 0;
    border: 5px solid transparent;
    border-bottom: 5px solid #b5b5b5;
    border-top: 0;
}
.pdf-scroll-thumb {
    width: 10px;
    height: 30px;
    margin: 4px auto 0;
    background: #b8b8b8;
}

.panel {
    display: flex;
    flex-direction: column;
    height: 340px;
    flex: none;
    background: #1e1e1e;
    border-top: 1px solid #444;
}
.panel-tabs {
    display: flex;
    align-items: center;
    gap: 23px;
    height: 35px;
    flex: none;
    padding-left: 22px;
    color: #8f8f8f;
    font-size: 11px;
    letter-spacing: -.2px;
}
.panel-badge {
    display: inline-block;
    min-width: 18px;
    margin-left: 10px;
    border-radius: 9px;
    background: #4d4d4d;
    color: #ddd;
    font-weight: 400;
    text-align: center;
    line-height: 18px;
}
.panel-on {
    position: relative;
    color: #e7e7e7;
}
.panel-on::after {
    content: "";
    position: absolute;
    left: -1px;
    right: -2px;
    bottom: -8px;
    height: 1px;
    background: #e7e7e7;
}
.panel-right {
    position: relative;
    display: flex;
    align-items: center;
    margin-left: auto;
    padding-right: 16px;
    color: #ccc;
}
.bash-select {
    display: flex;
    align-items: center;
    justify-content: space-between;
    width: 168px;
    height: 19px;
    padding: 0 4px;
    margin-right: 8px;
    background: #3c3c3c;
    color: #ddd;
    font-size: 11px;
}
.pi {
    width: 14px;
    font-size: 17px;
    line-height: 1;
    text-align: center;
}
.pi-chev {
    width: 10px;
    height: 10px;
    margin-left: 3px;
}
.pi-svg {
    width: 14px;
    height: 14px;
    margin-left: 11px;
}
.pi-up {
    margin-left: 28px;
    transform: rotate(180deg);
}
.pi-x {
    margin-left: 9px;
    font-size: 11px;
}
.terminal {
    padding: 15px 0 0 20.6px;
    color: #ccc;
    font-family: "DejaVu Sans Mono", monospace;
    font-size: 13.32px;
    line-height: 16px;
    white-space: pre;
}
.t-user {
    color: #23d18b;
}
.t-path {
    color: #3b8eea;
}
.t-cursor {
    display: inline-block;
    width: 8px;
    height: 16px;
    border: 1px solid #ccc;
    vertical-align: top;
}

.status {
    display: flex;
    align-items: center;
    height: 22px;
    flex: none;
    padding-left: 16px;
    background: #007acc;
    color: #fff;
    font-size: 13px;
}
.st-line {
    fill: none;
    stroke: #fff;
    stroke-width: 1;
}
.st-branch {
    width: 12px;
    height: 16px;
}
.st-main {
    margin-left: 4px;
}
.st-sync {
    width: 14px;
    height: 12px;
    margin-left: 16px;
}
.st-python {
    margin-left: 16px;
}
.st-err {
    width: 13px;
    height: 13px;
    margin-left: 17px;
}
.st-num {
    margin-left: 4px;
}
.st-warn {
    width: 14px;
    height: 13px;
    margin-left: 4px;
}
.st-debug {
    width: 14px;
    height: 14px;
    margin-left: 17px;
}
.st-home {
    width: 14px;
    height: 14px;
    margin-left: 17px;
}
.st-check {
    width: 11px;
    height: 10px;
    margin-left: 18px;
}
.st-right {
    display: flex;
    gap: 8px;
    margin-left: auto;
    padding-right: 8px;
}
.st-ico {
    width: 13px;
    height: 13px;
}

/* vivado window */
.vivado {
    display: flex;
    flex-direction: column;
    height: 1080px;
    background: #fff;
    color: #111;
    font-family: "DejaVu Sans", sans-serif;
    font-size: 12px;
}
.viv-title {
    position: relative;
    display: flex;
    align-items: center;
    justify-content: center;
    height: 37px;
    flex: none;
    background: #2d2d2d;
    border-top: 1px solid #3a3a3a;
}
.viv-title-text {
    color: #e6e6e6;
    font-family: "Noto Sans", sans-serif;
    font-size: 14.2px;
    font-weight: 600;
}
.viv-winbtns {
    top: 8px;
}
.btn-min-w {
    background: #ddd;
}
.btn-max-w {
    border-color: #ddd;
}
.btn-close-o {
    background: #e95420;
    color: #fff;
}
.viv-bars {
    display: flex;
    justify-content: space-between;
    height: 57px;
    flex: none;
    background: linear-gradient(180deg, #efefef 0%, #d9d9d9 100%);
    border-bottom: 1px solid #a4a4a4;
}
.viv-menu {
    display: flex;
    align-items: center;
    gap: 23px;
    height: 29px;
    padding-left: 17px;
    color: #222;
}
.viv-quick {
    display: flex;
    align-items: center;
    width: 153px;
    height: 22px;
    margin: -2px 0 0 -7px;
    padding-left: 12px;
    border-left: 1px solid #b9b9b9;
    color: #8a8a8a;
    position: relative;
}
.viv-quick::after {
    content: "";
    position: absolute;
    left: 12px;
    right: 0;
    bottom: -1px;
    height: 1px;
    background: #a0a0a0;
}
.quick-ico {
    width: 12px;
    height: 12px;
    margin-right: 5px;
    color: #999;
}
.viv-tools {
    display: flex;
    align-items: center;
    gap: 19px;
    height: 28px;
    padding-left: 18px;
}
.vt {
    width: 16px;
    height: 18px;
    flex: none;
}
.vt-sigma {
    color: #2f4f8f;
    font-size: 20px;
    font-weight: bold;
    line-height: 18px;
    text-align: center;
}
.bits {
    font-family: "DejaVu Sans Mono", monospace;
    font-size: 6px;
    font-weight: bold;
    fill: #666;
}
.viv-state {
    width: 200px;
    flex: none;
    padding-right: 8px;
}
.viv-done {
    display: flex;
    align-items: center;
    height: 31px;
    padding-left: 4px;
    color: #333;
    white-space: nowrap;
}
.done-check {
    width: 14px;
    height: 16px;
    margin-left: 15px;
}
.viv-layout {
    display: flex;
    align-items: center;
    height: 23px;
    background: #fff;
    border: 1px solid #ddd;
    color: #222;
}
.layout-ico {
    width: 13px;
    height: 16px;
    margin: 0 5px 0 6px;
}
.layout-chev {
    margin-left: auto;
    margin-right: 7px;
    color: #555;
}
.viv-body {
    display: flex;
    flex: 1;
    min-height: 0;
}
.flow {
    display: flex;
    flex-direction: column;
    width: 272px;
    flex: none;
}
.flow-head {
    display: flex;
    align-items: center;
    justify-content: space-between;
    height: 27px;
    flex: none;
    padding: 0 6px 0 9px;
    background: #6c6c6c;
    color: #fff;
    font-size: 12px;
    font-weight: bold;
}
.flow-head-icons {
    display: flex;
    align-items: center;
    gap: 9px;
    color: #d5d5d5;
}
.flow-head-icons svg {
    width: 11px;
    height: 12px;
}
.flow-head-icons b {
    font-size: 14px;
}
.flow-min {
    width: 10px;
    height: 2px;
    margin-top: 9px;
    background: #d5d5d5;
}
.flow-main {
    display: flex;
    flex: 1;
    min-height: 0;
}
.flow-list {
    flex: 1;
    min-width: 0;
    padding-top: 20px;
    overflow: hidden;
}
.fsec {
    display: flex;
    align-items: center;
    height: 28px;
    margin: 19px 0 -3px;
    padding-left: 7px;
    font-weight: bold;
}
.fsec:first-child {
    margin-top: 0;
}
.fsec-plain {
    font-weight: normal;
}
.fsec-on {
    background: #c9dcfb;
}
.fchev {
    width: 12px;
    height: 12px;
    margin-right: 7px;
    flex: none;
}
.fi, .fs {
    position: relative;
    display: flex;
    align-items: center;
    height: 28px;
    padding-left: 47px;
    white-space: nowrap;
}
.fs {
    padding-left: 68px;
}
.fi-off {
    color: #8a8a8a;
}
.fi-b {
    font-weight: bold;
}
.fi-chev {
    position: absolute;
    left: 27px;
    width: 11px;
    height: 11px;
    color: #333;
}
.fi-ico {
    position: absolute;
    left: 27px;
    width: 14px;
    height: 14px;
}
.fs-ico {
    position: absolute;
    left: 47px;
    width: 14px;
    height: 14px;
}
.flow-scroll {
    position: relative;
    width: 14px;
    flex: none;
    background: #f2f2f2;
    border-left: 1px solid #e2e2e2;
    border-right: 1px solid #dedede;
}
.fscroll-up {
    position: absolute;
    left: 1px;
    top: 1px;
    width: 11px;
    height: 11px;
    color: #666;
    transform: rotate(180deg);
}
.fscroll-down {
    position: absolute;
    left: 1px;
    bottom: 2px;
    width: 11px;
    height: 11px;
    color: #666;
}
.flow-thumb {
    position: absolute;
    left: 2px;
    top: 132px;
    width: 8px;
    height: 792px;
    border-radius: 4px;
    background: #bcbcbc;
}
.viv-main {
    display: flex;
    flex-direction: column;
    flex: 1;
    min-width: 0;
    border-left: 1px solid #a9a9a9;
}
.impl-bar {
    display: flex;
    align-items: center;
    height: 27px;
    flex: none;
    padding: 0 9px 0 12px;
    background: #c9dcfb;
    font-family: "Noto Sans", sans-serif;
    font-size: 13.5px;
}
.impl-bar b {
    font-weight: 600;
}
.impl-part {
    margin-left: 5px;
    font-size: 13px;
}
.impl-help {
    margin-left: auto;
    color: #999;
    font-size: 15px;
    font-weight: bold;
}
.impl-close {
    margin-left: 10px;
    color: #999;
    font-size: 12px;
}
.runs-wrap {
    display: flex;
    flex: 1;
    min-height: 0;
    padding: 10px 10px 2px;
}
.runs {
    display: flex;
    flex-direction: column;
    flex: 1;
    min-width: 0;
    border: 3px solid #4d7fcc;
}
.runs-tabs {
    display: flex;
    align-items: stretch;
    height: 27px;
    flex: none;
    background: #ececec;
    color: #777;
}
.rt {
    position: relative;
    display: flex;
    align-items: center;
    flex: none;
    padding-left: 7px;
    border-right: 1px solid #cfcfcf;
    white-space: nowrap;
    font-size: 14px;
}
.rt:nth-child(1) { width: 100px; padding-left: 5px; }
.rt:nth-child(2) { width: 96px; }
.rt:nth-child(3) { width: 47px; }
.rt:nth-child(4) { width: 79px; }
.rt:nth-child(5) { width: 130px; }
.rt:nth-child(6) { width: 49px; }
.rt:nth-child(7) { width: 115px; }
.rt:nth-child(8) { width: 67px; }
.rt:nth-child(9) { width: 68px; }
.rt-on {
    padding-left: 6px;
    background: #fff;
    color: #111;
    border-right: 0;
}
.rt-x {
    position: absolute;
    right: 4px;
    top: 6px;
    color: #888;
}
.rt-right {
    display: flex;
    align-items: center;
    gap: 8px;
    margin-left: auto;
    padding-right: 6px;
    color: #999;
}
.rt-right svg {
    width: 12px;
    height: 12px;
}
.rt-right b {
    font-size: 14px;
}
.rt-min {
    background: #999;
    margin-top: 8px;
}
.runs-tools {
    display: flex;
    align-items: center;
    height: 34px;
    flex: none;
    padding-left: 0;
    border-bottom: 2px solid #e6e6e6;
}
.rb {
    display: flex;
    align-items: center;
    justify-content: center;
    width: 35px;
    height: 24px;
    border-right: 1px solid #ddd;
}
.rb svg {
    width: 14px;
    height: 15px;
}
.rb-blue {
    color: #2f4f8f;
}
.rb-grey {
    color: #b8b8b8;
}
.rb-pct {
    font-size: 17px;
}
.runs-table-wrap {
    flex: 1;
    min-height: 0;
    overflow: hidden;
}
.runs-table {
    width: 1621px;
    table-layout: fixed;
    border-collapse: separate;
    border-spacing: 0;
    color: #222;
}
.c-name { width: 304px; }
.c-con { width: 200px; }
.c-status { width: 216px; }
.c-wns { width: 46px; }
.c-tns { width: 41px; }
.c-whs { width: 46px; }
.c-ths { width: 42px; }
.c-tpws { width: 52px; }
.c-power { width: 91px; }
.c-failed { width: 104px; }
.c-lut { width: 47px; }
.c-ff { width: 40px; }
.c-bram { width: 53px; }
.c-uram { width: 52px; }
.c-dsp { width: 43px; }
.c-start { width: 127px; }
.c-elapsed { width: 75px; }
.c-runs { width: 42px; }
.runs-table th {
    height: 21px;
    padding: 0 7px;
    background: #ececec;
    border-right: 1px solid #dcdcdc;
    font-weight: normal;
    text-align: left;
    white-space: nowrap;
    overflow: hidden;
}
.runs-table td {
    height: 22px;
    padding: 0 7px;
    border-right: 1px solid #e8e8e8;
    border-bottom: 1px solid #e2e2e2;
    white-space: nowrap;
    overflow: hidden;
}
.runs-table td.lv1 {
    padding-left: 41px;
    position: relative;
}
.runs-table td.lv2 {
    padding-left: 57px;
    position: relative;
}
.row-bold td {
    font-weight: bold;
    color: #111;
}
.runs-table td.num {
    text-align: right;
}
.active-tag {
    font-weight: normal;
    color: #888;
}
.runs-table td.cell-sel {
    box-shadow: inset 0 0 0 1px #4d90d8;
}
.row-group {
    border-right: 0;
}
.tchev {
    position: absolute;
    left: 5px;
    top: 5px;
    width: 11px;
    height: 11px;
    color: #666;
}
.tcheck {
    position: absolute;
    left: 23px;
    top: 4px;
    width: 12px;
    height: 14px;
}
.lv2 .tcheck {
    left: 39px;
}
.tfolder {
    position: absolute;
    left: 22px;
    top: 3px;
    width: 14px;
    height: 16px;
}
.runs-hscroll {
    display: flex;
    align-items: center;
    height: 13px;
    flex: none;
    padding: 0 3px;
    background: #f4f4f4;
    margin-bottom: 1px;
}
.hscroll-l, .hscroll-r {
    width: 0;
    height: 0;
    border: 4px solid transparent;
}
.hscroll-l {
    border-right: 5px solid #777;
    border-left: 0;
}
.hscroll-r {
    border-left: 5px solid #777;
    border-right: 0;
}
.hscroll-thumb {
    flex: 1;
    height: 8px;
    margin: 0 4px;
    border-radius: 4px;
    background: #bcbcbc;
}
.viv-foot {
    height: 20px;
    flex: none;
    background: #eee;
}
```
